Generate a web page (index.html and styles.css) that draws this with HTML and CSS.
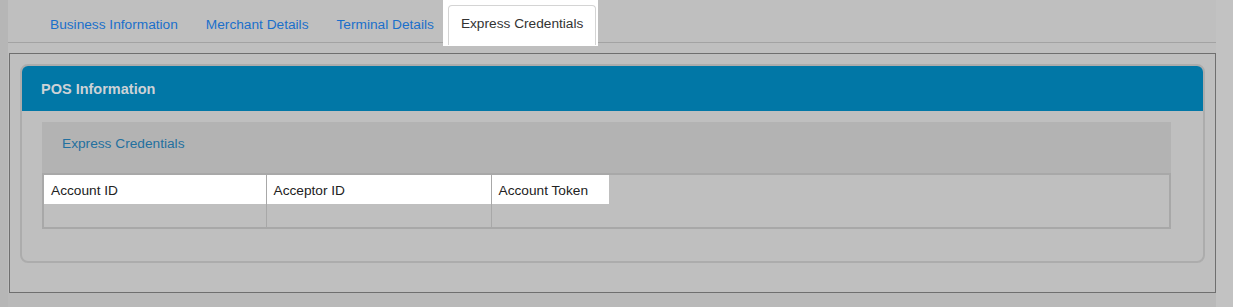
FILE: index.html
```html
<!DOCTYPE html>
<html lang="en">
<head>
  <meta charset="UTF-8">
  <meta name="viewport" content="width=device-width, initial-scale=1.0">
  <title>POS Information</title>
  <link rel="stylesheet" href="styles.css">
</head>
<body>
  <div class="side-left"></div>
  <div class="page">
    <ul class="tabs">
      <li class="tab"><a href="#">Business Information</a></li>
      <li class="tab"><a href="#">Merchant Details</a></li>
      <li class="tab"><a href="#">Terminal Details</a></li>
      <li class="tab active"><a href="#">Express Credentials</a></li>
    </ul>

    <div class="frame">
      <div class="panel">
        <div class="panel-heading">POS Information</div>
        <div class="section">
          <div class="section-heading">Express Credentials</div>
          <table class="grid">
            <colgroup>
              <col class="col-account">
              <col class="col-acceptor">
              <col>
            </colgroup>
            <thead>
              <tr>
                <th><span class="label">Account ID</span></th>
                <th><span class="label">Acceptor ID</span></th>
                <th><span class="label inline">Account Token</span></th>
              </tr>
            </thead>
            <tbody>
              <tr>
                <td></td>
                <td></td>
                <td></td>
              </tr>
            </tbody>
          </table>
        </div>
      </div>
    </div>
  </div>
  <div class="side-right"></div>
</body>
</html>
```

FILE: styles.css
```css
* {
  margin: 0;
  padding: 0;
  box-sizing: border-box;
}
body {
  font-family: "Liberation Sans", Arial, sans-serif;
  font-size: 13.7px;
  background-color: #b9b9b9;
  color: #222;
  display: flex;
  height: 100vh;
}
.side-left {
  width: 8px;
  background: #b6b6b6;
}
.side-right {
  flex: 1;
  background: #c2c2c2;
}
.page {
  width: 1208px;
  height: 293px;
  background: #bfbfbf;
}
.tabs {
  list-style: none;
  display: flex;
  height: 43px;
  padding-left: 28px;
  border-bottom: 1px solid #a3a3a3;
}
.tab a {
  display: block;
  padding: 0 14px;
  line-height: 35px;
  margin-top: 7px;
  color: #1a6fcb;
  text-decoration: none;
}
.tab.active {
  background: #fff;
  margin-left: -5px;
  padding: 1px 2px 0 5px;
  height: 46px;
}
.tab.active a {
  color: #333;
  margin-top: 4px;
  padding: 0 12px;
  height: 40px;
  line-height: 36px;
  border: 1px solid #d4d4d4;
  border-bottom: none;
  border-radius: 4px 4px 0 0;
}
.frame {
  margin: 10px 0 0 1px;
  height: 240px;
  border: 1px solid #6f6f6f;
  padding: 10px 10px 0;
}
.panel {
  border: 2px solid #acacac;
  border-radius: 8px;
  height: 199px;
}
.panel-heading {
  background: #0177a6;
  color: #cdd2d6;
  font-weight: bold;
  font-size: 14.5px;
  height: 45px;
  line-height: 47px;
  padding-left: 19px;
  border-radius: 6px 6px 0 0;
}
.section {
  margin: 11px 32px 0 20px;
}
.section-heading {
  background: #b3b3b3;
  color: #23709f;
  height: 51px;
  line-height: 44px;
  padding-left: 20px;
}
.grid {
  width: 100%;
  border-collapse: collapse;
  border: 2px solid #a8a8a8;
}
.col-account {
  width: 223px;
}
.col-acceptor {
  width: 225px;
}
.grid th {
  padding: 0;
  text-align: left;
  font-weight: normal;
  height: 29px;
}
.grid th + th,
.grid td + td {
  border-left: 1px solid #a8a8a8;
}
.label {
  display: block;
  background: #fff;
  height: 29px;
  padding: 3px 0 0 7px;
  line-height: 26px;
  color: #222;
}
.label.inline {
  display: inline-block;
  width: 117px;
}
.grid td {
  height: 24px;
}
```
